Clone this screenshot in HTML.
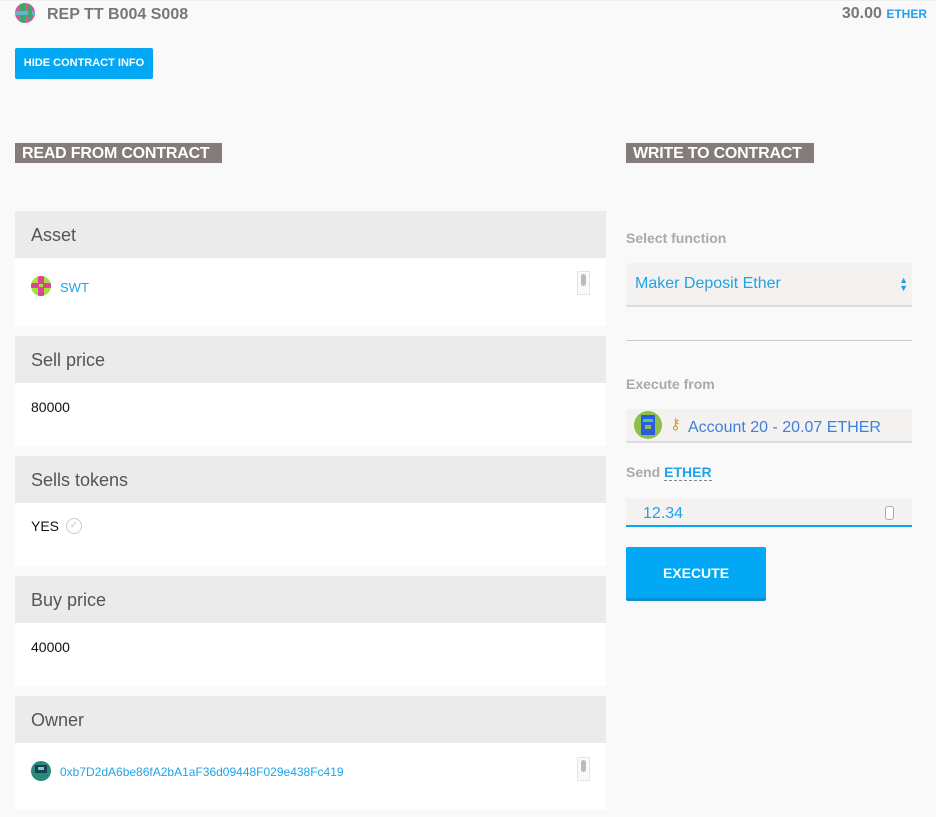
<!DOCTYPE html>
<html><head><style>
body{margin:0;width:936px;height:817px;background:#f9f9f9;font-family:"Liberation Sans",sans-serif;position:relative;overflow:hidden}
.a{position:absolute}
.hdr{position:absolute;left:15px;width:591px;height:47px;background:#ecebeb;font-size:18px;color:#555;line-height:49px;text-indent:16px}
.bd{position:absolute;left:15px;width:591px;background:#fff;font-size:14px;color:#111}
.tag{position:absolute;background:#847b7b;color:#fff;font-weight:bold;font-size:16px;height:20px;line-height:21px;padding:0 7px;top:143px;letter-spacing:-0.2px}
.lbl{position:absolute;left:626px;font-size:14px;font-weight:bold;color:#aaa}
.blue{color:#1fa3e8}
.sb{position:absolute;left:577px;width:11px;height:22px;border:1px solid #e4e4e4;background:#fafafa}
.sb:after{content:"";position:absolute;left:3px;top:2px;width:5px;height:12px;border-radius:3px;background:#bbb}
</style></head><body>
<div class="a" style="left:0;top:0;width:936px;height:1px;background:#eee"></div>
<svg class="a" style="left:15px;top:3px" width="20" height="20"><clipPath id="c"><circle cx="10" cy="10" r="10"/></clipPath><g clip-path="url(#c)"><rect width="20" height="20" fill="#d45aa0"/><rect x="5" y="0" width="5" height="20" fill="#3aa86a"/><rect x="0" y="8" width="20" height="4" fill="#5fb8c8"/><rect x="13" y="3" width="4" height="14" fill="#3aa86a"/></g></svg>
<div class="a" style="left:47px;top:6px;font-size:16px;font-weight:bold;color:#777">REP TT B004 S008</div>
<div class="a" style="right:9px;top:5px;font-size:16px;font-weight:bold;color:#777">30.00 <span class="blue" style="font-size:12px">ETHER</span></div>
<div class="a" style="left:15px;top:48px;width:138px;height:31px;background:#02a8f3;border-radius:2px;color:#fff;font-size:11px;font-weight:bold;line-height:31px;text-align:center">HIDE CONTRACT INFO</div>
<div class="tag" style="left:15px;width:193px">READ FROM CONTRACT</div>
<div class="tag" style="left:626px;width:174px">WRITE TO CONTRACT</div>

<div class="hdr" style="top:211px">Asset</div>
<div class="bd" style="top:258px;height:68px">
<svg class="a" style="left:16px;top:18px" width="20" height="20"><clipPath id="d"><circle cx="10" cy="10" r="10"/></clipPath><g clip-path="url(#d)"><rect width="20" height="20" fill="#9ee23a"/><rect x="7" y="0" width="6" height="20" fill="#e03f9a"/><rect x="0" y="7" width="20" height="5" fill="#e03f9a"/><rect x="8" y="8" width="4" height="3" fill="#9ee23a"/></g></svg>
<span class="a blue" style="left:45px;top:22px;font-size:13px">SWT</span></div>
<div class="sb" style="top:271px"></div>
<div class="hdr" style="top:336px">Sell price</div>
<div class="bd" style="top:383px;height:63px"><span class="a" style="left:16px;top:16px">80000</span></div>
<div class="hdr" style="top:456px">Sells tokens</div>
<div class="bd" style="top:503px;height:63px"><span class="a" style="left:16px;top:15px">YES</span><span class="a" style="left:51px;top:15px;width:14px;height:14px;border:1px solid #ccc;border-radius:50%;color:#ccc;font-size:10px;text-align:center;line-height:14px">✓</span></div>
<div class="hdr" style="top:576px">Buy price</div>
<div class="bd" style="top:623px;height:63px"><span class="a" style="left:16px;top:16px">40000</span></div>
<div class="hdr" style="top:696px">Owner</div>
<div class="bd" style="top:743px;height:67px">
<svg class="a" style="left:16px;top:18px" width="20" height="20"><clipPath id="e"><circle cx="10" cy="10" r="10"/></clipPath><g clip-path="url(#e)"><rect width="20" height="20" fill="#2a8a7a"/><rect x="4" y="4" width="12" height="8" fill="#1b3e5a"/><rect x="7" y="6" width="6" height="3" fill="#7ad0c0"/></g></svg>
<span class="a blue" style="left:45px;top:22px;font-size:12px">0xb7D2dA6be86fA2bA1aF36d09448F029e438Fc419</span></div>
<div class="sb" style="top:757px"></div>

<div class="lbl" style="top:230px">Select function</div>
<div class="a" style="left:626px;top:263px;width:286px;height:42px;background:#f3f2f1;border-bottom:2px solid #ddd;border-radius:3px 3px 0 0"><span class="a blue" style="left:9px;top:12px;font-size:16px">Maker Deposit Ether</span><span class="a blue" style="right:4px;top:13px;font-size:9px;line-height:8px">▲<br>▼</span></div>
<div class="a" style="left:626px;top:340px;width:286px;height:1px;background:#ccc"></div>
<div class="lbl" style="top:376px">Execute from</div>
<div class="a" style="left:626px;top:409px;width:286px;height:32px;background:#f3f2f1;border-bottom:2px solid #ddd">
<svg class="a" style="left:8px;top:2px" width="28" height="28"><clipPath id="f"><circle cx="14" cy="14" r="14"/></clipPath><g clip-path="url(#f)"><rect width="28" height="28" fill="#8cc04a"/><rect x="7" y="4" width="14" height="20" fill="#2d5be0"/><rect x="9" y="8" width="10" height="3" fill="#4ad07a"/><rect x="11" y="14" width="6" height="4" fill="#8cc04a"/></g></svg>
<span class="a" style="left:44px;top:6px;font-size:15px;color:#d89a30">⚷</span><span class="a" style="left:62px;top:10px;font-size:16px;color:#3d7fe0">Account 20 - 20.07 ETHER</span></div>
<div class="lbl" style="top:464px">Send <span class="blue" style="border-bottom:1px dashed #888">ETHER</span></div>
<div class="a" style="left:626px;top:498px;width:286px;height:27px;background:#f3f2f1;border-bottom:2px solid #02a8f3"><span class="a blue" style="left:17px;top:7px;font-size:16px">12.34</span><span class="a" style="left:259px;top:8px;width:7px;height:12px;border:1px solid #aaa;border-radius:3px;background:#fff"></span></div>
<div class="a" style="left:626px;top:547px;width:140px;height:51px;background:#02a8f3;border-bottom:3px solid #0a90d0;border-radius:2px;color:#fff;font-weight:bold;font-size:14px;text-align:center;line-height:53px">EXECUTE</div>
</body></html>
